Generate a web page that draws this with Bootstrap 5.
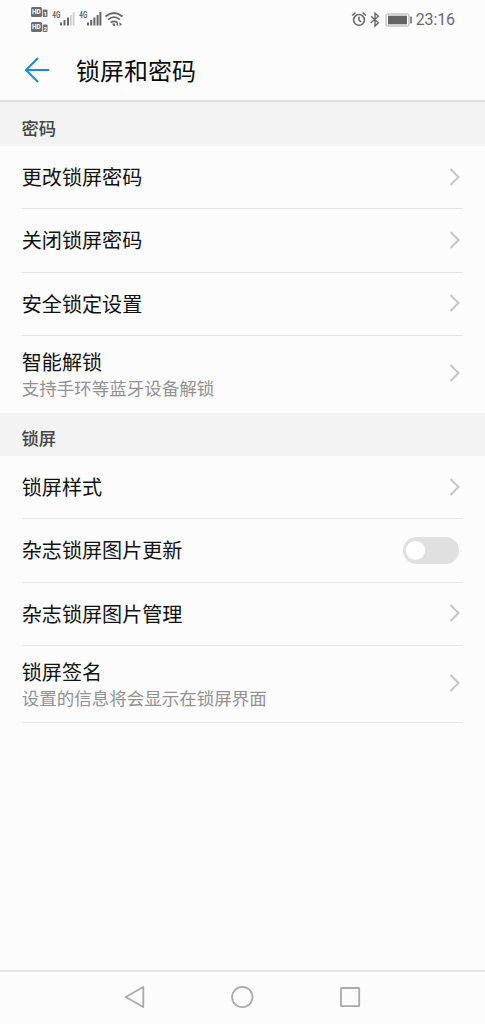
<!DOCTYPE html>
<html lang="zh-CN">
<head>
<meta charset="utf-8">
<meta name="viewport" content="width=device-width, initial-scale=1">
<title>锁屏和密码</title>
<link rel="stylesheet" href="https://cdn.jsdelivr.net/npm/bootstrap@5.3.0/dist/css/bootstrap.min.css">
<style>
body{background:#fcfcfc;color:#111;font-family:Roboto,"Noto Sans CJK SC",sans-serif;height:1024px;overflow:hidden}
svg{display:block;flex:none}
.statusbar{height:40px;padding:0 30px;color:#6a6a6a}
.clock{font-size:16px;line-height:20px;letter-spacing:-.1px;color:#6a6a6a}
.appbar{height:62px;padding-left:24px;border-bottom:2px solid #dedede}
.apptitle{font-size:24px;line-height:36px;margin-left:26px;padding-top:4px;color:#0a0a0a}
.section-head{background:#f3f3f3;height:44px;padding:9px 21.5px 0;font-size:17.3px;line-height:26px;font-weight:500;color:#444}
.section-head.second{height:43px;padding-top:10px}
.settings{margin:0 22px}
.setting{height:63.3px;border-bottom:1.5px solid #e3e3e3;padding-right:2px}
.setting>svg{margin-bottom:1px}
.setting>.label-main{padding-top:2px}
.setting.tall{height:77.1px}
.setting.tall .label-pair{padding-top:4px}
.setting.plain-end{border-bottom-color:transparent}
.label-main,.label-sub{margin-left:-.3px}
.label-main{font-size:20.1px;line-height:26px}
.label-sub{font-size:17.5px;line-height:26px;color:#929292}
.switch-off{width:56px;height:27px;background:#e0e0e0;padding:0 2.5px;margin-right:2px}
.knob{width:19px;height:19px;background:#fff}
.navkeys{height:54px;border-top:2px solid #e6e6e6}
</style>
</head>
<body class="d-flex flex-column">
<div class="statusbar d-flex justify-content-between align-items-center">
  <svg width="94" height="30" viewBox="30 5 94 30" font-family="Roboto,sans-serif" font-weight="700">
    <g fill="#6d6d6d"><rect x="31" y="7" width="11" height="10" rx="1.5"/><rect x="42.700" y="9.500" width="4.800" height="7.500" rx="1"/><rect x="31" y="22" width="11" height="10" rx="1.5"/><rect x="42.700" y="24.500" width="4.800" height="7.500" rx="1"/></g>
    <g fill="#fff" font-size="6.5"><text x="32" y="14.400">HD</text><text x="32" y="29.400">HD</text><text x="43.600" y="15.600" font-size="6">1</text><text x="43.400" y="30.600" font-size="6">2</text></g>
    <g fill="#666" font-size="8.5"><text x="52.300" y="18.400" textLength="8" lengthAdjust="spacingAndGlyphs">4G</text><text x="79.300" y="18.400" textLength="8" lengthAdjust="spacingAndGlyphs">4G</text></g>
    <g fill="#666"><path d="M60 22.500h2v3h-2zM63.500 20h2v5.500h-2zM67 17.500h2v8h-2z"/><path d="M87 22.500h2v3h-2zM90.200 20h2v5.500h-2zM93.400 17.500h2v8h-2zM96.600 15h2v10.500h-2zM99.400 12h2v13.500h-2z"/></g>
    <path fill="#d0d0d0" d="M70 15h1.800v10.500h-1.800zM72.700 12h1.800v13.500h-1.800z"/>
    <g fill="none" stroke="#666" stroke-width="1.700"><path d="M105.500 16.500Q114 9.500 122.500 16.500M108 19.700Q114 14.700 120 19.700M110.600 22.600Q114 20 117.500 22.600"/></g>
    <path fill="#666" d="M112 23.600h3v2.400h-1.500zM116 24.300l2-2v4zM122 24.300l-2.500-2v4z"/>
  </svg>
  <div class="d-flex align-items-center">
    <svg width="65" height="24" viewBox="350.500 7.500 65 24" fill="none" stroke="#6a6a6a">
      <circle cx="358.500" cy="19.400" r="5.400" stroke-width="1.600"/><path d="M358.500 16v3.800l2.300 1.600M351.700 15l3.200-2.900M362.100 12.100l3.200 2.900" stroke-width="1.500"/>
      <path d="M370.500 15.800l7.400 6.500-3.400 3.300V12.500l3.400 3.200-7.400 6.600" stroke-width="1.400"/>
      <rect x="385.500" y="13.500" width="23" height="12" rx="1.500" stroke="#aaa"/><rect x="387.500" y="15.200" width="19" height="8.600" fill="#646464" stroke="none"/><path d="M410.500 16v7" stroke-width="1.500"/>
    </svg>
    <span class="clock">23:16</span>
  </div>
</div>
<header class="appbar d-flex align-items-center">
  <svg width="26" height="26" viewBox="0 0 26 26" fill="none" stroke="#2186dc" stroke-width="2" stroke-linecap="round" stroke-linejoin="round"><path d="M13.500 1.500L2 13l11.500 11.500M2 13h22.500"/></svg>
  <h1 class="apptitle fw-normal mb-0">锁屏和密码</h1>
</header>
<main class="flex-grow-1">
  <div class="section-head d-flex align-items-center">密码</div>
  <div class="settings">
    <div class="setting d-flex align-items-center justify-content-between"><span class="label-main">更改锁屏密码</span><svg width="12" height="18" viewBox="0 0 12 18" fill="none" stroke="#c6c6c6" stroke-width="2"><path d="M1.500 1l8 8-8 8"/></svg></div>
    <div class="setting d-flex align-items-center justify-content-between"><span class="label-main">关闭锁屏密码</span><svg width="12" height="18" viewBox="0 0 12 18" fill="none" stroke="#c6c6c6" stroke-width="2"><path d="M1.500 1l8 8-8 8"/></svg></div>
    <div class="setting d-flex align-items-center justify-content-between"><span class="label-main">安全锁定设置</span><svg width="12" height="18" viewBox="0 0 12 18" fill="none" stroke="#c6c6c6" stroke-width="2"><path d="M1.500 1l8 8-8 8"/></svg></div>
    <div class="setting tall plain-end d-flex align-items-center justify-content-between"><div class="label-pair"><div class="label-main">智能解锁</div><div class="label-sub">支持手环等蓝牙设备解锁</div></div><svg width="12" height="18" viewBox="0 0 12 18" fill="none" stroke="#c6c6c6" stroke-width="2"><path d="M1.500 1l8 8-8 8"/></svg></div>
  </div>
  <div class="section-head second d-flex align-items-center">锁屏</div>
  <div class="settings">
    <div class="setting d-flex align-items-center justify-content-between"><span class="label-main">锁屏样式</span><svg width="12" height="18" viewBox="0 0 12 18" fill="none" stroke="#c6c6c6" stroke-width="2"><path d="M1.500 1l8 8-8 8"/></svg></div>
    <div class="setting d-flex align-items-center justify-content-between"><span class="label-main">杂志锁屏图片更新</span><div class="switch-off rounded-pill d-flex align-items-center" role="switch" aria-checked="false"><div class="knob rounded-circle"></div></div></div>
    <div class="setting d-flex align-items-center justify-content-between"><span class="label-main">杂志锁屏图片管理</span><svg width="12" height="18" viewBox="0 0 12 18" fill="none" stroke="#c6c6c6" stroke-width="2"><path d="M1.500 1l8 8-8 8"/></svg></div>
    <div class="setting tall d-flex align-items-center justify-content-between"><div class="label-pair"><div class="label-main">锁屏签名</div><div class="label-sub">设置的信息将会显示在锁屏界面</div></div><svg width="12" height="18" viewBox="0 0 12 18" fill="none" stroke="#c6c6c6" stroke-width="2"><path d="M1.500 1l8 8-8 8"/></svg></div>
  </div>
</main>
<nav class="navkeys d-flex justify-content-center">
  <svg width="241" height="52" viewBox="122 972 241 52" fill="none" stroke="#aaa" stroke-width="1.800" stroke-linejoin="round"><path d="M143.300 987v20l-17.600-10z"/><circle cx="242.300" cy="997" r="10.200"/><rect x="341" y="988" width="18.200" height="18.200" rx=".5"/></svg>
</nav>
<script src="https://cdn.jsdelivr.net/npm/bootstrap@5.3.0/dist/js/bootstrap.bundle.min.js"></script>
</body>
</html>
